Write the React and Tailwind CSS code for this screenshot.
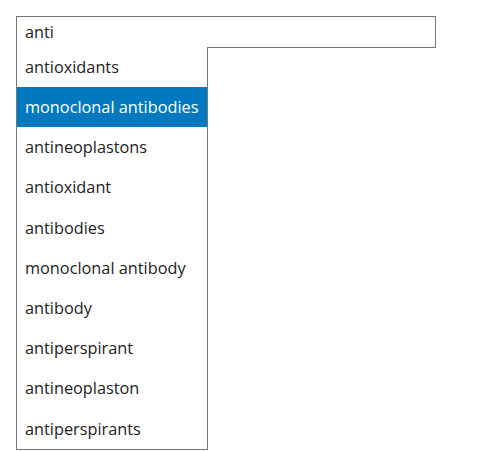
import { useState } from "react";

const suggestions = [
  "antioxidants",
  "monoclonal antibodies",
  "antineoplastons",
  "antioxidant",
  "antibodies",
  "monoclonal antibody",
  "antibody",
  "antiperspirant",
  "antineoplaston",
  "antiperspirants",
];

export default function App() {
  const [query, setQuery] = useState("anti");
  const active = 1;

  return (
    <div className="min-h-screen bg-white p-4 font-['Open_Sans',sans-serif] text-[#222]">
      <div className="relative w-[420px]">
        <input
          value={query}
          onChange={(e) => setQuery(e.target.value)}
          className="block h-8 w-full border border-[#767676] bg-white px-2 text-[16.3px] outline-none"
        />
        <ul className="absolute left-0 top-[31px] w-[192px] border-x border-b border-[#767676] bg-white">
          {suggestions.map((s, i) => (
            <li
              key={s}
              className={`flex h-[40.2px] items-center px-2 text-[16.3px] ${
                i === active ? "bg-[#0079c1] text-white" : ""
              }`}
            >
              {s}
            </li>
          ))}
        </ul>
      </div>
    </div>
  );
}
